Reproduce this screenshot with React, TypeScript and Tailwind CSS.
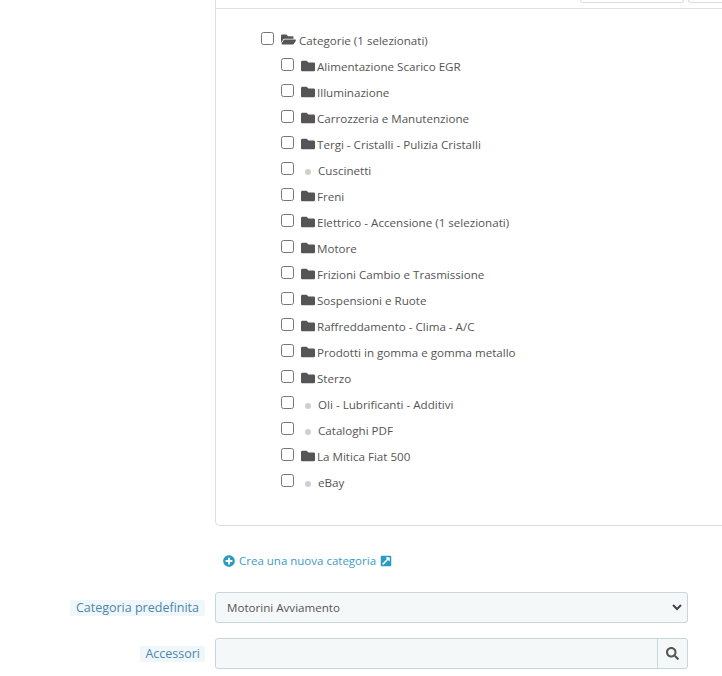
import { FaFolder, FaFolderOpen, FaPlusCircle, FaExternalLinkSquareAlt, FaSearch } from 'react-icons/fa';

interface TreeItem {
  name: string;
  leaf?: boolean;
}

const items: TreeItem[] = [
  { name: 'Alimentazione Scarico EGR' },
  { name: 'Illuminazione' },
  { name: 'Carrozzeria e Manutenzione' },
  { name: 'Tergi - Cristalli - Pulizia Cristalli' },
  { name: 'Cuscinetti', leaf: true },
  { name: 'Freni' },
  { name: 'Elettrico - Accensione (1 selezionati)' },
  { name: 'Motore' },
  { name: 'Frizioni Cambio e Trasmissione' },
  { name: 'Sospensioni e Ruote' },
  { name: 'Raffreddamento - Clima - A/C' },
  { name: 'Prodotti in gomma e gomma metallo' },
  { name: 'Sterzo' },
  { name: 'Oli - Lubrificanti - Additivi', leaf: true },
  { name: 'Cataloghi PDF', leaf: true },
  { name: 'La Mitica Fiat 500' },
  { name: 'eBay', leaf: true },
];

function TreeRow({ name, leaf }: TreeItem) {
  return (
    <div className="flex h-[26px] items-start">
      <input type="checkbox" className="m-0 mt-[5px] h-[13px] w-[13px]" />
      {leaf ? (
        <span className="ml-[11px] mt-[12px] h-[6px] w-[6px] rounded-full bg-[#cfcfcf]" />
      ) : (
        <FaFolder className="ml-[7px] mt-[6px] h-[14px] w-[14px] text-[#555555]" />
      )}
      <span className={`mt-[5px] leading-[18px] ${leaf ? 'ml-[7px]' : 'ml-[2px]'}`}>{name}</span>
    </div>
  );
}

export default function App() {
  return (
    <div className="h-[676px] w-[722px] overflow-hidden bg-white font-['Open_Sans',sans-serif] text-[11.6px] text-[#555555]">
      {/* Category tree panel */}
      <div className="ml-[215px] h-[526px] rounded-bl-[5px] border-b border-l border-[#dcdcdc]">
        <div className="flex h-[9px] items-start gap-[4px] border-b border-[#e0e0e0] pl-[364px]">
          <div className="h-[3px] w-[104px] rounded-b-[4px] border border-t-0 border-[#dcdcdc]" />
          <div className="h-[3px] flex-1 rounded-bl-[4px] border-b border-l border-[#dcdcdc]" />
        </div>
        <div className="pl-[45px] pt-[18px]">
          <div className="flex h-[26px] items-start">
            <input type="checkbox" className="m-0 mt-[5px] h-[13px] w-[13px]" />
            <FaFolderOpen className="ml-[7px] mt-[5px] h-[15px] w-[15px] text-[#555555]" />
            <span className="ml-[3px] mt-[5px] leading-[18px]">Categorie (1 selezionati)</span>
          </div>
          <div className="pl-[20px]">
            {items.map((item) => (
              <TreeRow key={item.name} {...item} />
            ))}
          </div>
        </div>
      </div>

      {/* Create category link */}
      <div className="ml-[223px] mt-[26px] flex h-[18px] items-center">
        <FaPlusCircle className="h-[12px] w-[12px] text-[#2a9cc4]" />
        <span className="ml-[4px] text-[11.5px] text-[#3a9cc4]">Crea una nuova categoria</span>
        <FaExternalLinkSquareAlt className="ml-[4px] h-[12px] w-[12px] text-[#2a9cc4]" />
      </div>

      {/* Form fields */}
      <div className="mt-[22px] flex h-[31px] items-center">
        <div className="flex w-[215px] justify-end pr-[10px]">
          <span className="rounded-[2px] bg-[#eff7fb] px-[6px] text-[12.5px] leading-[16px] text-[#4d86ad]">Categoria predefinita</span>
        </div>
        <div className="flex h-[31px] w-[473px] items-center rounded-[3px] border border-[#c7d6db] bg-[#f5f8f9] pl-[11px] pr-[5px] text-[#555555]">
          <span className="flex-1">Motorini Avviamento</span>
          <svg width="10" height="7" viewBox="0 0 10 7" fill="none" stroke="#444444" strokeWidth="2">
            <path d="M1 1l4 4 4-4" />
          </svg>
        </div>
      </div>
      <div className="mt-[15px] flex h-[31px] items-center">
        <div className="flex w-[215px] justify-end pr-[10px]">
          <span className="rounded-[2px] bg-[#eff7fb] px-[5px] text-[12.5px] leading-[16px] text-[#4d86ad]">Accessori</span>
        </div>
        <div className="flex h-[31px] w-[473px] rounded-[3px] border border-[#c7d6db] bg-[#f5f8f9]">
          <div className="flex-1" />
          <div className="flex w-[30px] items-center justify-center border-l border-[#c7d6db]">
            <FaSearch className="h-[13px] w-[13px] text-[#555555]" />
          </div>
        </div>
      </div>
    </div>
  );
}
